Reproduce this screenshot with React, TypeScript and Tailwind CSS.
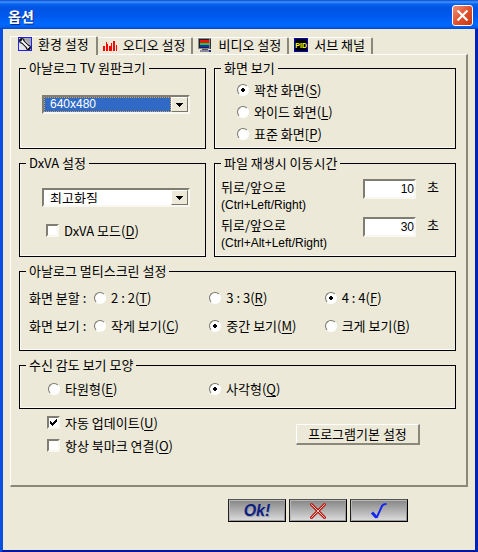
import { useState } from 'react'
import type { ReactNode } from 'react'
import clsx from 'clsx'

function WrenchIcon() {
  return (
    <svg width="14" height="14" viewBox="0 0 14 14" aria-hidden="true">
      <rect width="14" height="14" fill="#2020f0" />
      <rect x="1" y="1" width="12" height="12" fill="#e4e4ea" />
      <path d="M5 1 H13 V9 Z" fill="#a4a6b0" />
      <g fill="none" stroke="#181818">
        <path d="M4 4 L10 10" strokeWidth="4" />
        <circle cx="3.8" cy="3.8" r="1.6" strokeWidth="2.4" />
        <circle cx="10.4" cy="10.4" r="1.4" strokeWidth="2.4" />
      </g>
      <g fill="none" stroke="#fff">
        <path d="M4 4 L10.5 10.5" strokeWidth="1.8" />
        <path d="M2.5 4.8 H4.6 V2.5" strokeWidth="1" />
        <path d="M9.5 11.5 L11.5 9.5" strokeWidth="1" />
      </g>
    </svg>
  )
}

function BarsIcon() {
  return (
    <svg width="14" height="14" viewBox="0 0 14 14" shapeRendering="crispEdges" fill="#f00" aria-hidden="true">
      <rect x="0" y="8" width="2" height="5" />
      <rect x="3" y="4" width="1" height="9" />
      <rect x="4" y="6" width="1" height="7" />
      <rect x="6" y="8" width="2" height="5" />
      <rect x="8" y="5" width="1" height="8" />
      <rect x="10" y="3" width="2" height="10" />
      <rect x="13" y="7" width="1" height="6" />
    </svg>
  )
}

function MonitorIcon() {
  return (
    <svg width="14" height="14" viewBox="0 0 14 14" shapeRendering="crispEdges" aria-hidden="true">
      <rect x="0" y="0" width="13" height="11" fill="#888" />
      <rect x="12" y="1" width="1" height="10" fill="#333" />
      <rect x="1" y="1" width="10" height="9" fill="#222" />
      <rect x="2" y="2" width="9" height="3" fill="#f01010" />
      <rect x="2" y="5" width="9" height="2" fill="#10d820" />
      <rect x="2" y="7" width="9" height="2" fill="#1828e8" />
      <rect x="4" y="11" width="6" height="1" fill="#555" />
      <rect x="2" y="12" width="10" height="2" fill="#8888a0" />
      <rect x="11" y="12" width="2" height="2" fill="#1a2a80" />
    </svg>
  )
}

function PidIcon() {
  return (
    <span className="flex h-3.5 w-3.5 items-center justify-center border border-[#0000c0] bg-black font-['Liberation_Sans',sans-serif] text-[7px] leading-none font-bold text-[#ffff00]">
      PID
    </span>
  )
}

const tabs = [
  { id: 'env', label: '환경 설정', icon: <WrenchIcon /> },
  { id: 'audio', label: '오디오 설정', icon: <BarsIcon /> },
  { id: 'video', label: '비디오 설정', icon: <MonitorIcon /> },
  { id: 'sub', label: '서브 채널', icon: <PidIcon /> },
]

function Group({ title, className, children }: { title: string; className?: string; children: ReactNode }) {
  return (
    <fieldset className="min-w-0 border border-black shadow-[inset_1px_-1px_0_#fbfaf4]">
      <legend className="ml-1.5 bg-[#ece9d8] px-[3px] leading-4">{title}</legend>
      <div className={className}>{children}</div>
    </fieldset>
  )
}

// 단축키는 밑줄로 표시
function Caption({ text, hotkey, open = '(', close = ')' }: { text: string; hotkey: string; open?: string; close?: string }) {
  return (
    <span className="whitespace-nowrap">
      {text}
      {open}
      <u className="underline-offset-2">{hotkey}</u>
      {close}
    </span>
  )
}

type OptionProps = { text: string; hotkey: string; checked?: boolean; open?: string }

function Radio({ name, text, hotkey, checked, open }: OptionProps & { name: string }) {
  return (
    <label className="flex items-center gap-[5px]">
      <input
        type="radio"
        name={name}
        defaultChecked={checked}
        className="h-3 w-3 shrink-0 appearance-none rounded-full border border-t-[#77756a] border-r-white border-b-white border-l-[#77756a] bg-white checked:bg-[radial-gradient(circle,#000_2px,#fff_2px)]"
      />
      <Caption text={text} hotkey={hotkey} open={open} />
    </label>
  )
}

function CheckBox({ text, hotkey, checked }: OptionProps) {
  return (
    <label className="flex items-center gap-[5px]">
      <span className="grid h-[13px] w-[13px] shrink-0">
        <input
          type="checkbox"
          defaultChecked={checked}
          className="peer col-start-1 row-start-1 appearance-none border-2 border-t-[#807e72] border-r-[#f8f7f0] border-b-[#f8f7f0] border-l-[#807e72] bg-white"
        />
        <svg
          viewBox="0 0 13 13"
          shapeRendering="crispEdges"
          className="pointer-events-none invisible col-start-1 row-start-1 peer-checked:visible"
        >
          <path d="M3 5h1v1h1v1h1v-1h1v-1h1v-1h1v-1h1v3h-1v1h-1v1h-1v1h-1v1h-1v-1h-1v-1h-1z" fill="#000" />
        </svg>
      </span>
      <Caption text={text} hotkey={hotkey} />
    </label>
  )
}

function DropDown({ label, options, active }: { label: string; options: string[]; active?: boolean }) {
  return (
    <div className="grid h-[19px] grid-cols-[1fr_17px] border-2 border-t-[#807e72] border-r-[#f8f7f0] border-b-[#f8f7f0] border-l-[#807e72] bg-white">
      <select
        aria-label={label}
        className={clsx(
          'min-w-0 appearance-none pl-[5px] leading-[13px] outline-none',
          active
            ? "border border-dotted border-[#e0a040] bg-[#316ac5] font-['Liberation_Sans',sans-serif] text-xs leading-[13px] text-white"
            : 'border border-white bg-white'
        )}
      >
        {options.map((o) => (
          <option key={o}>{o}</option>
        ))}
      </select>
      <span className="pointer-events-none flex items-center justify-center border border-t-white border-r-[#77756a] border-b-[#77756a] border-l-white bg-[#ece9d8]">
        <svg width="7" height="4" viewBox="0 0 7 4" shapeRendering="crispEdges">
          <path d="M0 0h7v1h-1v1h-1v1h-1v1h-1v-1h-1v-1h-1v-1h-1z" />
        </svg>
      </span>
    </div>
  )
}

function SeekRow({ id, keys, value }: { id: string; keys: string; value: string }) {
  return (
    <div className="flex items-start leading-[19px]">
      <label htmlFor={id} className="flex-1 whitespace-nowrap">
        <span className="block">뒤로/앞으로</span>
        <span className="block font-['Liberation_Sans',sans-serif] text-xs leading-[19px]">{keys}</span>
      </label>
      <input
        id={id}
        defaultValue={value}
        className="mt-0.5 h-5 w-[53px] border-2 border-t-[#807e72] border-r-[#f8f7f0] border-b-[#f8f7f0] border-l-[#807e72] bg-white text-right font-['Liberation_Sans',sans-serif] text-xs leading-4 outline-none"
      />
      <span className="ml-[11px]">초</span>
    </div>
  )
}

function BarButton({ label, children }: { label: string; children: ReactNode }) {
  return (
    <button
      aria-label={label}
      className="flex h-[23px] w-[58px] items-center justify-center border border-t-[#555] border-r-black border-b-black border-l-[#222] bg-linear-to-b from-[#858585] to-[#dedede] shadow-[inset_1px_1px_0_#b8b8b8,inset_-1px_-1px_0_#999]"
    >
      {children}
    </button>
  )
}

export default function App() {
  const [tab, setTab] = useState('env')

  return (
    <div className="min-h-screen border-x-[3px] border-b-[3px] border-l-[#0a50e0] border-r-[#0022b8] border-b-[#0018a0] bg-[#ece9d8] font-['Noto_Sans_CJK_KR',sans-serif] text-[13px] text-black">
      <header className="-mx-[3px] flex h-[29px] items-center justify-between bg-[linear-gradient(to_bottom,#0a48c8_0,#3c94ff_2px,#0a62ee_4px,#0054e3_8px,#0058ec_16px,#0068ff_24px,#0060f4_27px,#0044c8_29px)] pt-0.5 pr-[5px] pl-2">
        <h1 className="text-sm font-bold text-white [text-shadow:1px_1px_0_#0a2a80]">옵션</h1>
        <button
          aria-label="닫기"
          className="flex h-[21px] w-[21px] items-center justify-center rounded-[3px] border border-white bg-linear-to-br from-[#f09078] via-[#e0502c] to-[#c83810]"
        >
          <svg width="13" height="13" viewBox="0 0 13 13" stroke="#fff" strokeWidth="2.2">
            <path d="M1.5 1.5 11.5 11.5M11.5 1.5 1.5 11.5" />
          </svg>
        </button>
      </header>

      <main className="px-[7px] pt-[7px] pb-7">
        <div role="tablist" className="flex items-end">
          {tabs.map((t, i) => (
            <button
              key={t.id}
              role="tab"
              aria-selected={tab === t.id}
              onClick={() => setTab(t.id)}
              className={clsx(
                'flex items-center gap-1.5 rounded-t-[2px] border-t border-r-2 border-t-white border-r-[#8a887a] bg-[#ece9d8] leading-[14px] whitespace-nowrap',
                i === 0 ? 'border-l border-l-white pl-[7px]' : 'pl-[5px]',
                tab === t.id ? 'z-10 -mb-px h-[19px] pr-[7px] pb-1' : 'h-[17px] pr-1.5 pb-0.5'
              )}
            >
              {t.icon}
              {t.label}
            </button>
          ))}
        </div>

        <div className="border-t border-r-2 border-b-2 border-l border-t-white border-r-[#8a887a] border-b-[#8a887a] border-l-white pt-[5px] pr-2.5 pb-7 pl-2">
          <div className="grid grid-cols-[187fr_242fr] gap-x-2 gap-y-1.5">
            <Group title="아날로그 TV 원판크기" className="pt-[19px] pr-[15px] pb-[34px] pl-[22px]">
              <DropDown label="아날로그 TV 원판크기" options={['640x480', '320x240']} active />
            </Group>
            <Group title="화면 보기" className="grid auto-rows-[22px] pt-[3px] pl-[22px]">
              <Radio name="view" text="꽉찬 화면" hotkey="S" checked />
              <Radio name="view" text="와이드 화면" hotkey="L" />
              <Radio name="view" text="표준 화면" hotkey="P" open="[" />
            </Group>
            <Group title="DxVA 설정" className="pt-[17px] pr-[15px] pl-[22px]">
              <DropDown label="DxVA 설정" options={['최고화질', '일반화질']} />
              <div className="mt-3.5 pl-1">
                <CheckBox text="DxVA 모드" hotkey="D" />
              </div>
            </Group>
            <Group title="파일 재생시 이동시간" className="pt-1.5 pr-4 pb-[3px] pl-1.5">
              <SeekRow id="seek-short" keys="(Ctrl+Left/Right)" value="10" />
              <SeekRow id="seek-long" keys="(Ctrl+Alt+Left/Right)" value="30" />
            </Group>
          </div>

          <div className="mt-1.5 grid gap-y-1.5">
            <Group
              title="아날로그 멀티스크린 설정"
              className="grid auto-rows-[28px] grid-cols-[65px_1fr_1fr_1fr] items-center pt-[5px] pr-[15px] pb-2.5 pl-[9px]"
            >
              <span>화면 분할 :</span>
              <Radio name="split" text="2 : 2" hotkey="T" />
              <Radio name="split" text="3 : 3" hotkey="R" />
              <Radio name="split" text="4 : 4" hotkey="F" checked />
              <span>화면 보기 :</span>
              <Radio name="size" text="작게 보기" hotkey="C" />
              <Radio name="size" text="중간 보기" hotkey="M" checked />
              <Radio name="size" text="크게 보기" hotkey="B" />
            </Group>
            <Group title="수신 감도 보기 모양" className="grid auto-rows-[22px] grid-cols-[161px_1fr] pt-[5px] pb-2 pl-7">
              <Radio name="meter" text="타원형" hotkey="E" />
              <Radio name="meter" text="사각형" hotkey="Q" checked />
            </Group>
          </div>

          <div className="mt-0.5 flex items-center justify-between pr-9 pl-7">
            <div className="grid auto-rows-[23px]">
              <CheckBox text="자동 업데이트" hotkey="U" checked />
              <CheckBox text="항상 북마크 연결" hotkey="O" />
            </div>
            <button className="h-[21px] w-[124px] border-t border-r-2 border-b-2 border-l border-t-white border-r-[#8a887a] border-b-[#8a887a] border-l-white leading-4">
              프로그램기본 설정
            </button>
          </div>
        </div>

        <div className="mt-3 flex justify-end gap-[3px] pr-[60px]">
          <BarButton label="Ok!">
            <span className="font-['Liberation_Sans'] text-base leading-none font-bold text-[#10207c] italic [text-shadow:1px_1px_0_#98a0b0]">
              Ok!
            </span>
          </BarButton>
          <BarButton label="취소">
            <svg width="18" height="18" viewBox="0 0 18 18" fill="none" strokeLinecap="round">
              <path d="M2.5 2.5 15.5 15.5M15.5 2.5 2.5 15.5" stroke="#c01810" strokeWidth="3" />
              <path d="M2.5 2.5 15.5 15.5M15.5 2.5 2.5 15.5" stroke="#f0c8c0" strokeWidth="1" />
            </svg>
          </BarButton>
          <BarButton label="적용">
            <svg width="18" height="18" viewBox="0 0 18 18" fill="none" stroke="#1428f0">
              <path d="M2 10.5 L6.5 15.5" strokeWidth="3" />
              <path d="M6.5 16 L12 4 Q13 2 16.5 2" strokeWidth="2" />
            </svg>
          </BarButton>
        </div>
      </main>
    </div>
  )
}
